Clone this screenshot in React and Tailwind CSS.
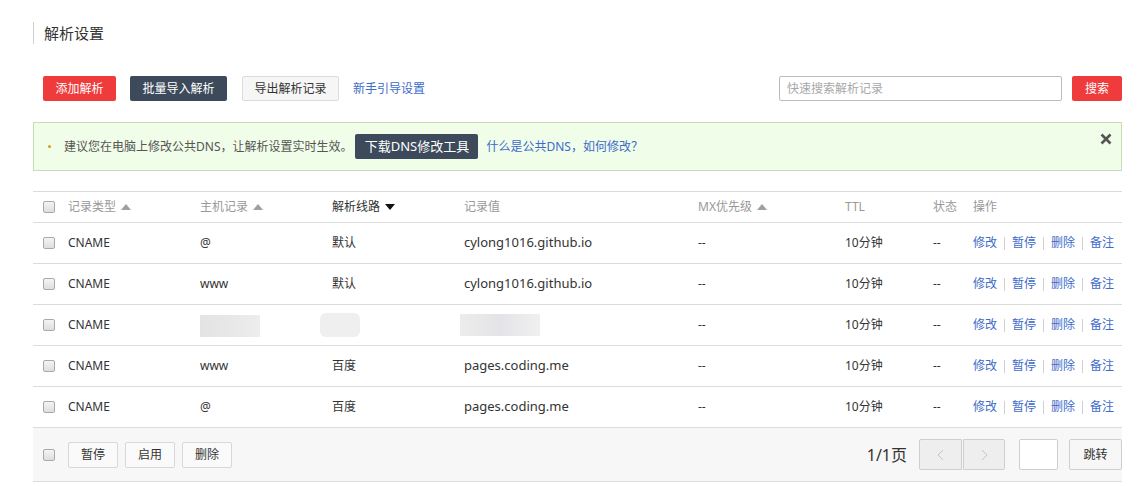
import React from 'react'

const font = { fontFamily: '"Segoe UI", "Noto Sans", "Noto Sans CJK SC", sans-serif' }

const cols = 'grid grid-cols-[35px_132px_132px_132px_234px_147px_88px_40px_1fr] items-center'

const rows = [
  { type: 'CNAME', host: '@', line: '默认', value: 'cylong1016.github.io' },
  { type: 'CNAME', host: 'www', line: '默认', value: 'cylong1016.github.io' },
  { type: 'CNAME', blurred: true },
  { type: 'CNAME', host: 'www', line: '百度', value: 'pages.coding.me' },
  { type: 'CNAME', host: '@', line: '百度', value: 'pages.coding.me' },
]

function Checkbox() {
  return <div className="ml-[10px] w-[12px] h-[12px] rounded-[2px] border border-[#a9a9a9] bg-gradient-to-b from-[#f4f4f4] to-[#dedede]" />
}

function Up({ dark }) {
  return (
    <svg width="10" height="6" viewBox="0 0 10 6" className="ml-[5px]">
      <path d="M0 6 L5 0 L10 6 Z" fill={dark ? '#222' : '#a0a0a0'} />
    </svg>
  )
}

function Down() {
  return (
    <svg width="10" height="6" viewBox="0 0 10 6" className="ml-[5px]">
      <path d="M0 0 L10 0 L5 6 Z" fill="#111" />
    </svg>
  )
}

function Sep() {
  return <span className="mx-[7px] w-px h-[13px] bg-[#d0d0d0]" />
}

export default function App() {
  return (
    <div className="w-[1137px] h-[486px] bg-white text-[#333] overflow-hidden" style={font}>
      <div className="ml-[33px] mr-[15px]">
        {/* 标题 */}
        <div className="pt-[22px]">
          <div className="border-l border-[#cfcfcf] pl-[10px] h-[22px] flex items-center text-[15px] text-[#333]">解析设置</div>
        </div>

        {/* 按钮行 */}
        <div className="mt-[32px] flex items-center pl-[10px] text-[12px]">
          <button className="w-[73px] h-[25px] rounded-[2px] bg-[#ef3b3b] text-white">添加解析</button>
          <button className="ml-[14px] w-[97px] h-[25px] rounded-[2px] bg-[#3c4a5b] text-white">批量导入解析</button>
          <button className="ml-[15px] w-[97px] h-[25px] rounded-[2px] bg-[#f6f6f6] border border-[#dcdcdc] text-[#333]">导出解析记录</button>
          <a className="ml-[14px] text-[#3e6bca]">新手引导设置</a>
          <div className="ml-auto flex items-center">
            <div className="w-[283px] h-[25px] border border-[#bcbcbc] rounded-[2px] flex items-center px-[7px] text-[#a8a8a8]">快速搜索解析记录</div>
            <button className="ml-[10px] w-[50px] h-[25px] rounded-[2px] bg-[#ef3b3b] text-white">搜索</button>
          </div>
        </div>

        {/* 提示 */}
        <div className="mt-[21px] h-[49px] border border-[#c6deb6] bg-[#f0fde9] flex items-center pl-[14px] pr-[10px] text-[12px]">
          <span className="w-[3px] h-[3px] bg-[#d4a017] rounded-full" />
          <span className="ml-[13px] text-[#555]">建议您在电脑上修改公共DNS，让解析设置实时生效。</span>
          <button className="ml-[3px] h-[25px] w-[123px] rounded-[2px] bg-[#3c4a5b] text-white text-[13px]">下载DNS修改工具</button>
          <a className="ml-[8px] text-[#3e6bca]">什么是公共DNS，如何修改？</a>
          <svg width="12" height="12" viewBox="0 0 12 12" className="ml-auto self-start mt-[10px] mr-[-1px]">
            <path d="M1.5 1.5 L10.5 10.5 M10.5 1.5 L1.5 10.5" stroke="#555" strokeWidth="2.6" />
          </svg>
        </div>

        {/* 表格 */}
        <div className="mt-[20px] border-t border-[#dcdcdc] text-[12px]">
          <div className={`${cols} h-[31px] border-b border-[#dcdcdc] text-[#999]`}>
            <Checkbox />
            <div className="flex items-center">记录类型<Up /></div>
            <div className="flex items-center">主机记录<Up /></div>
            <div className="flex items-center text-[#333]">解析线路<Down /></div>
            <div>记录值</div>
            <div className="flex items-center">MX优先级<Up /></div>
            <div>TTL</div>
            <div>状态</div>
            <div>操作</div>
          </div>
          {rows.map((r, i) => (
            <div key={i} className={`${cols} h-[41px] border-b border-[#dcdcdc]`}>
              <Checkbox />
              <div>{r.type}</div>
              {r.blurred ? (
                <>
                  <div><div className="w-[60px] h-[22px] mt-[1px] bg-gradient-to-r from-[#e3e3e3] to-[#ededed] blur-[0.5px]" /></div>
                  <div><div className="-ml-[12px] w-[40px] h-[24px] rounded-[6px] bg-[#efefef] blur-[0.5px]" /></div>
                  <div><div className="-ml-[4px] w-[80px] h-[22px] bg-gradient-to-r from-[#ececec] via-[#e4e4e8] to-[#f0f0f0] blur-[0.5px]" /></div>
                </>
              ) : (
                <>
                  <div>{r.host}</div>
                  <div>{r.line}</div>
                  <div className="text-[13px]">{r.value}</div>
                </>
              )}
              <div>--</div>
              <div>10分钟</div>
              <div>--</div>
              <div className="flex items-center text-[#3e6bca]">
                <span>修改</span><Sep /><span>暂停</span><Sep /><span>删除</span><Sep /><span>备注</span>
              </div>
            </div>
          ))}

          {/* 底部 */}
          <div className="h-[54px] bg-[#f7f7f7] border-b border-[#dcdcdc] flex items-center">
            <Checkbox />
            <button className="ml-[13px] w-[50px] h-[26px] rounded-[2px] border border-[#d8d8d8] bg-[#fafafa] text-[#333]">暂停</button>
            <button className="ml-[7px] w-[50px] h-[26px] rounded-[2px] border border-[#d8d8d8] bg-[#fafafa] text-[#333]">启用</button>
            <button className="ml-[7px] w-[50px] h-[26px] rounded-[2px] border border-[#d8d8d8] bg-[#fafafa] text-[#333]">删除</button>
            <div className="ml-auto flex items-center">
              <span className="text-[16px] text-[#333]">1/1页</span>
              <div className="ml-[12px] flex">
                <div className="w-[43px] h-[31px] border border-[#cfcfcf] bg-[#eeeeee] rounded-l-[2px] flex items-center justify-center">
                  <svg width="7" height="12" viewBox="0 0 7 12"><path d="M6 1 L1 6 L6 11" stroke="#c4c4c4" fill="none" strokeWidth="1" /></svg>
                </div>
                <div className="ml-px w-[42px] h-[31px] border border-[#cfcfcf] bg-[#eeeeee] rounded-r-[2px] flex items-center justify-center">
                  <svg width="7" height="12" viewBox="0 0 7 12"><path d="M1 1 L6 6 L1 11" stroke="#c4c4c4" fill="none" strokeWidth="1" /></svg>
                </div>
              </div>
              <div className="ml-[14px] w-[39px] h-[31px] border border-[#cfcfcf] rounded-[2px] bg-white" />
              <button className="ml-[11px] w-[53px] h-[31px] border border-[#cfcfcf] rounded-[2px] bg-[#f7f7f7] text-[#333]">跳转</button>
            </div>
          </div>
        </div>
      </div>
    </div>
  )
}
